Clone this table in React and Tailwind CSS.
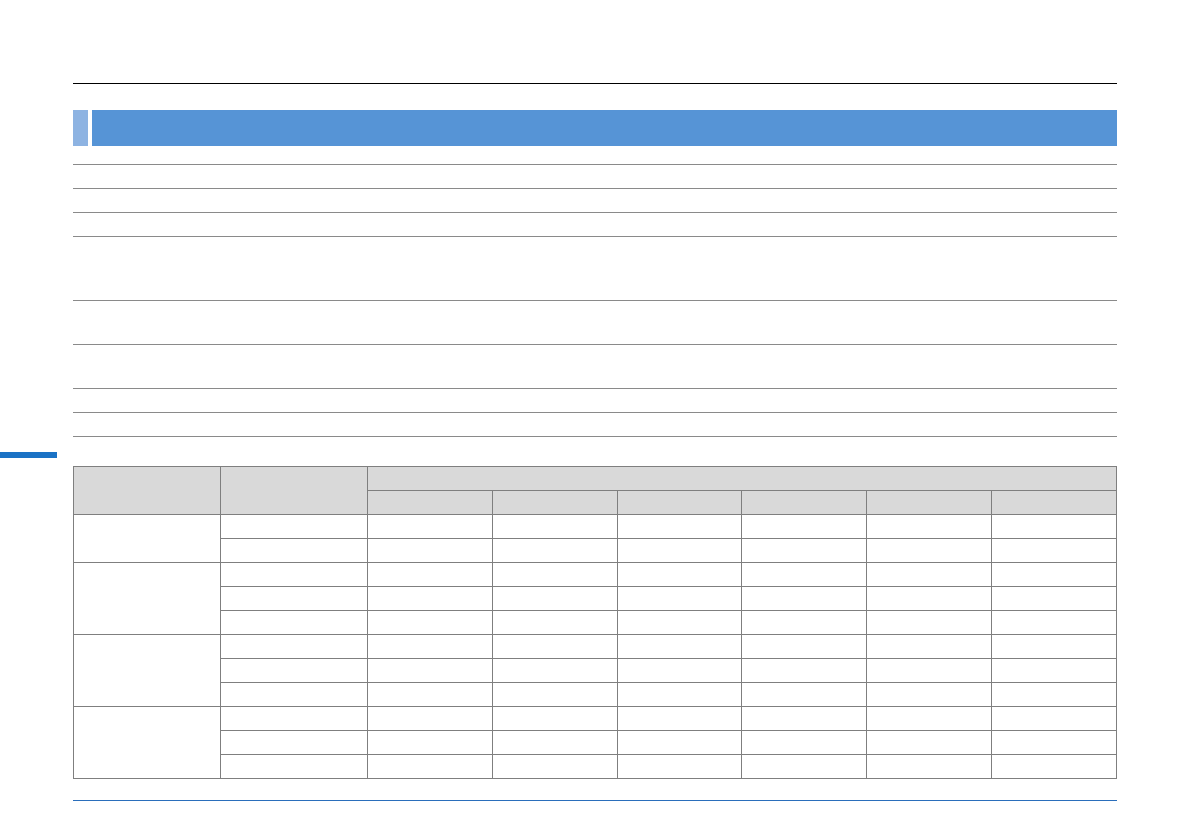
const ruleRows = ["h-[19px]", "h-[24px]", "h-[24px]", "h-[24px]", "h-[64px]", "h-[44px]", "h-[44px]", "h-[24px]", "h-[24px]"];

const groups = [2, 3, 3, 3];
const dataCols = 6;

function Cell({ className = "", ...rest }) {
  return <td className={`border border-[#7f7f7f] p-0 ${className}`} {...rest} />;
}

export default function App() {
  return (
    <div className="w-[1190px] h-[840px] bg-white flex flex-col font-['Liberation_Sans',sans-serif]">
      {/* Heading block */}
      <div className="ml-[73px] w-[1044px] pt-[83px] flex flex-col">
        <div className="h-px bg-black" />
        <div className="mt-[26px] h-[36px] flex gap-[4px]">
          <div className="w-[15px] bg-[#8db3e2]" />
          <div className="flex-1 bg-[#5694d6]" />
        </div>
        {ruleRows.map((h, i) => (
          <div key={i} className={`${h} border-b border-[#8a8a8a]`} />
        ))}
      </div>

      {/* Side index tab */}
      <div className="mt-[15px] h-[6px] w-[57px] bg-[#1a72c5]" />

      {/* Table */}
      <div className="ml-[73px] w-[1044px] mt-[8px]">
        <table className="w-full table-fixed border-collapse">
          <colgroup>
            <col className="w-[147px]" />
            <col className="w-[147px]" />
            {Array.from({ length: dataCols }).map((_, i) => (
              <col key={i} />
            ))}
          </colgroup>
          <thead className="bg-[#d9d9d9]">
            <tr className="h-[24px]">
              <Cell rowSpan={2} />
              <Cell rowSpan={2} />
              <Cell colSpan={dataCols} />
            </tr>
            <tr className="h-[24px]">
              {Array.from({ length: dataCols }).map((_, c) => (
                <Cell key={c} />
              ))}
            </tr>
          </thead>
          <tbody>
            {groups.map((n, g) =>
              Array.from({ length: n }).map((_, r) => (
                <tr key={`${g}-${r}`} className="h-[24px]">
                  {r === 0 && <Cell rowSpan={n} />}
                  <Cell />
                  {Array.from({ length: dataCols }).map((_, c) => (
                    <Cell key={c} />
                  ))}
                </tr>
              ))
            )}
          </tbody>
        </table>
      </div>

      {/* Footer rule */}
      <div className="ml-[73px] w-[1044px] mt-[21px] h-px bg-[#2a6ebb]" />
    </div>
  );
}
